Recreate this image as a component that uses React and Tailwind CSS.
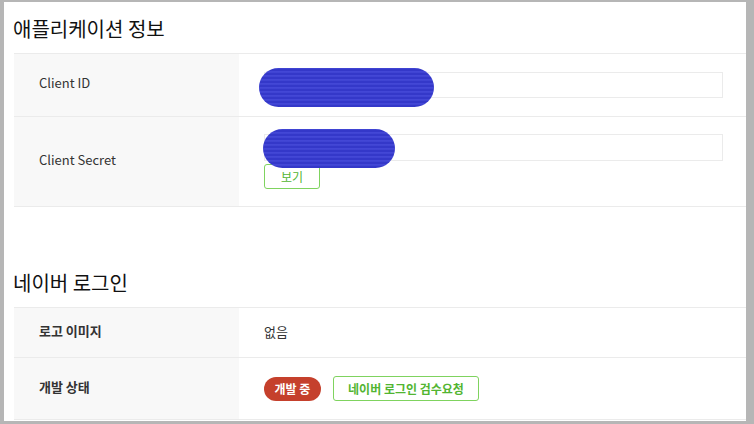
import React from "react";

const font = { fontFamily: '"Noto Sans CJK KR", "Noto Sans", sans-serif' };

const Scribble = ({ className }) => (
  <div
    className={
      "absolute rounded-full bg-[#3b3ed0] bg-[repeating-linear-gradient(0deg,#3438c9_0px,#3438c9_2px,#4b50dc_3px,#3b3ed0_4px)] " +
      className
    }
  />
);

const Row = ({ label, bold, h, children }) => (
  <div className={`flex border-b border-[#ebebeb] ${h}`}>
    <div
      className={`w-[225px] shrink-0 bg-[#f8f8f8] pl-[25px] pb-[4px] flex items-center text-[13px] text-[#333] ${
        bold ? "font-bold" : ""
      }`}
    >
      {label}
    </div>
    <div className="flex-1 pl-[25px] pr-[23px] flex flex-col justify-center">
      {children}
    </div>
  </div>
);

export default function App() {
  return (
    <div
      className="w-[754px] h-[424px] bg-[#b6b6b6] pt-[2px] pl-[4px] pr-[8px] pb-[3px]"
      style={font}
    >
      <div className="h-full bg-white pl-[10px] overflow-hidden">
        <div className="h-[51px] flex items-end pb-[10px]">
          <h2 className="text-[20px] leading-[28px] text-[#111] -ml-[1px]">
            애플리케이션 정보
          </h2>
        </div>
        <div className="border-t border-[#ebebeb]">
          <Row label="Client ID" h="h-[63px]">
            <div className="relative h-[26px] border border-[#ebebeb]">
              <Scribble className="-left-[6px] -top-[5px] w-[175px] h-[39px]" />
            </div>
          </Row>
          <Row label="Client Secret" h="h-[90px]">
            <div className="relative h-[27px] border border-[#ebebeb]">
              <Scribble className="-left-[2px] -top-[6px] w-[132px] h-[39px]" />
            </div>
            <button className="mt-[3px] w-[56px] h-[25px] rounded-[3px] border border-[#7fd35f] text-[12px] text-[#52b532] bg-white">
              보기
            </button>
          </Row>
        </div>

        <div className="h-[100px] flex items-end pb-[10px]">
          <h2 className="text-[20px] leading-[28px] text-[#111] -ml-[1px]">
            네이버 로그인
          </h2>
        </div>
        <div className="border-t border-[#ebebeb]">
          <Row label="로고 이미지" bold h="h-[50px]">
            <span className="text-[13px] text-[#333] pb-[1px]">없음</span>
          </Row>
          <Row label="개발 상태" bold h="h-[62px]">
            <div className="flex items-center gap-[12px]">
              <span className="w-[57px] h-[24px] rounded-full bg-[#c5402c] text-white text-[12px] font-bold flex items-center justify-center">
                개발 중
              </span>
              <button className="w-[146px] h-[25px] rounded-[3px] border border-[#7fd35f] text-[12px] font-bold text-[#52b532] bg-white">
                네이버 로그인 검수요청
              </button>
            </div>
          </Row>
        </div>
      </div>
    </div>
  );
}
